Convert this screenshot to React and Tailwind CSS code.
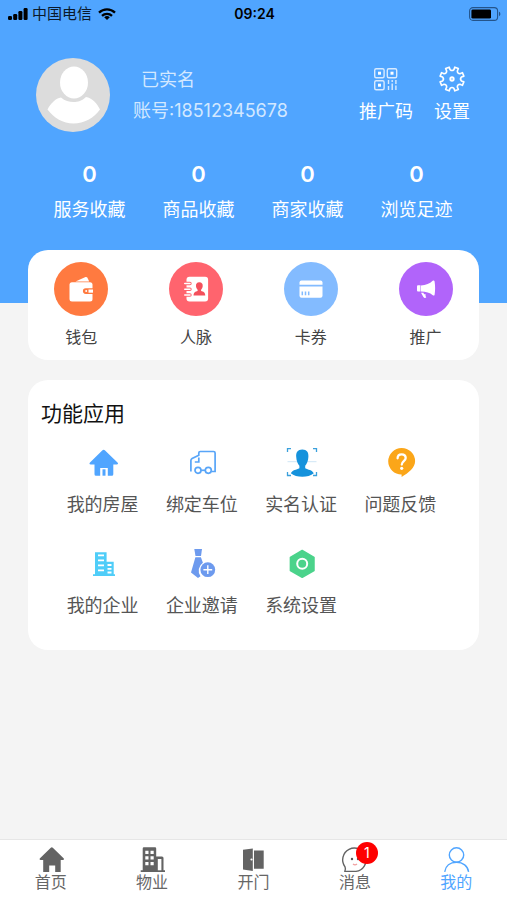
import React from "react";

const BLUE = "#50a5ff";

// outline of a cog wheel centred on 13,13
function gearPath(teeth) {
  const step = 360 / teeth;
  const at = (r, deg) => {
    const a = (deg * Math.PI) / 180;
    return `${(13 + r * Math.cos(a)).toFixed(2)} ${(13 + r * Math.sin(a)).toFixed(2)}`;
  };
  let d = "";
  for (let i = 0; i < teeth; i++) {
    const c = step / 2 + i * step;
    d += `${i === 0 ? "M" : "L"}${at(9.6, c - 11)}L${at(12.2, c - 9)}L${at(12.2, c + 9)}L${at(9.6, c + 11)}`;
    d += `Q${at(7.6, c + step / 2)} ${at(9.6, c + step - 11)}`;
  }
  return d + "Z";
}

/* ---------- Status bar ---------- */
function SignalIcon() {
  return (
    <svg className="w-5 h-3" viewBox="0 0 20 12" fill="#000">
      <rect x="0" y="8" width="4" height="4" rx="1.2" />
      <rect x="5.200" y="6" width="4" height="6" rx="1.2" />
      <rect x="10.4" y="3" width="4" height="9" rx="1.2" />
      <rect x="15.6" y="0" width="4" height="12" rx="1.2" />
    </svg>
  );
}

function WifiIcon() {
  return (
    <svg className="w-[18px] h-3" viewBox="0 0 18 12" fill="none" stroke="#000" strokeWidth="2.300">
      <path d="M1 4.6a11.6 11.6 0 0 1 16 0" />
      <path d="M4 7.8a7.2 7.2 0 0 1 10 0" />
      <path d="M9 12 6.2 9.3a4 4 0 0 1 5.6 0z" fill="#000" stroke="none" />
    </svg>
  );
}

function BatteryIcon() {
  return (
    <svg className="w-8 h-[14px]" viewBox="0 0 32 14">
      <rect x="0.6" y="0.6" width="28" height="12.8" rx="3.4" fill="none" stroke="#24548a" strokeWidth="1.1" />
      <rect x="2.4" y="2.4" width="19.6" height="9.2" rx="1.4" fill="#000" />
      <path d="M30 4.8c1.8.6 1.8 3.8 0 4.4z" fill="#24548a" />
    </svg>
  );
}

/* ---------- Header ---------- */
function Avatar() {
  return (
    <svg className="size-[74px] shrink-0" viewBox="0 0 74 74">
      <circle cx="37" cy="37" r="37" fill="#dcdcdc" />
      <path d="M25 39.500C20 40 14 46 11.500 51.500C18 60 27 65.500 37.500 65.500S58 60 64 51.500C61 45 56 40 50 39C46 43 42 44 37.500 44S29 43 25 39.500Z" fill="#fff" />
      <ellipse cx="38" cy="24.500" rx="14" ry="16" fill="#fff" />
    </svg>
  );
}

function QrIcon() {
  return (
    <svg className="size-[26px]" viewBox="0 0 26 26" fill="none" stroke="#d9ebff" strokeWidth="1.400">
      <rect x="1.700" y="2.700" width="9.400" height="9" rx="1.500" />
      <rect x="14.300" y="2.700" width="9.400" height="9" rx="1.500" />
      <rect x="1.700" y="14.700" width="9.400" height="9" rx="1.500" />
      <g fill="#fff" stroke="none">
        <rect x="5" y="5.700" width="3" height="3" />
        <rect x="17.500" y="5.700" width="3" height="3" />
        <rect x="5" y="17.700" width="3" height="3" />
      </g>
      <path d="M15.500 14v4M15.500 20v4M19.200 14v2M19.200 17.500v6.500M22.900 14v4M22.900 19.500v4.500" />
    </svg>
  );
}

function GearIcon() {
  return (
    <svg className="size-[26px] overflow-visible" viewBox="0 0 26 26" fill="none" stroke="#fff" strokeWidth="1.600" strokeLinejoin="round">
      <path d={gearPath(8)} />
      <circle cx="13" cy="13" r="1.700" strokeWidth="1.900" />
    </svg>
  );
}

/* ---------- Round shortcuts ---------- */
function WalletIcon() {
  return (
    <svg className="size-[54px]" viewBox="0 0 54 54">
      <circle cx="27" cy="27" r="27" fill="#ff7a40" />
      <path d="M21.500 19.500 31 15.200c1-.4 2-.2 2.400.6l1.800 3.700z" fill="#fff" />
      <rect x="15.500" y="20.300" width="23" height="19.100" rx="2.500" fill="#fff" />
      <path d="M39 26.300h-7.300a2.800 2.800 0 0 0 0 5.600H39z" fill="#ff7a40" />
      <path d="M39 27.500h-4.500v3.200H39z" fill="#fff" />
      <circle cx="32.200" cy="29.100" r="1" fill="#fff" />
    </svg>
  );
}

function ContactsIcon() {
  return (
    <svg className="size-[54px]" viewBox="0 0 54 54">
      <circle cx="27" cy="27" r="27" fill="#ff646e" />
      <rect x="17.500" y="14.800" width="21.600" height="24.600" rx="3" fill="#fff" />
      <g stroke="#ff646e" strokeWidth="3.400" strokeLinecap="round">
        <path d="M16 21.500h5M16 27.200h5M16 33h5" />
      </g>
      <g stroke="#fff" strokeWidth="1.600" strokeLinecap="round">
        <path d="M15.800 21.500h5.200M15.800 27.200h5.200M15.800 33h5.200" />
      </g>
      <path d="M30.300 20.300c2.600 0 3.600 1.700 3.400 3.900-.1 1.600-.9 2.700-1.600 3.500v1.200c2.300.6 4 1.300 4.200 4.600H24.500c.2-3.300 1.900-4 4.100-4.600v-1.200c-.7-.8-1.500-1.900-1.600-3.500-.2-2.200.8-3.900 3.300-3.900z" fill="#f4505c" />
    </svg>
  );
}

function CardIcon() {
  return (
    <svg className="size-[54px]" viewBox="0 0 54 54">
      <circle cx="27" cy="27" r="27" fill="#83bbff" />
      <path d="M15.500 22.800v-2.300a2 2 0 0 1 2-2h19a2 2 0 0 1 2 2v2.300z" fill="#fff" />
      <path d="M15.500 24.600h23v9.200a2 2 0 0 1-2 2h-19a2 2 0 0 1-2-2z" fill="#fff" />
      <path d="M18.300 29.500v3.800M21.500 29.500v3.800M24.700 29.500v3.800" stroke="#83bbff" strokeWidth="1.500" />
    </svg>
  );
}

function MegaphoneIcon() {
  return (
    <svg className="size-[54px]" viewBox="0 0 54 54">
      <circle cx="27" cy="27" r="27" fill="#b164fa" />
      <g fill="#fff">
        <path d="M18 24.600c0-.8.500-1.300 1.300-1.300H21.500v6.300h-2.200c-.8 0-1.300-.5-1.300-1.300z" />
        <path d="M22 23.400c5-.3 8.700-1.700 11.700-4.600.8-.7 1.700-.4 1.900.6.700 4.600.7 8.800 0 13.300-.2 1-1 1.200-1.800.5-3-2.400-6.700-3.600-11.800-3.700z" />
        <path d="M22 30.700h2.600c0 1.200.4 1.600 1.500 1.600 1 0 1 1.200.2 1.400l1 1.600c-.9 1-2.200.8-2.900-.4z" />
      </g>
    </svg>
  );
}

/* ---------- Function icons ---------- */
function FnSvg({ children }) {
  return (
    <svg className="size-7 overflow-visible" viewBox="0 0 28 28" fill="none">
      {children}
    </svg>
  );
}

function HouseIcon() {
  return (
    <FnSvg>
      <path d="M13.200 2.600a2 2 0 0 1 2.900 0L28.500 14.400c1 1 .5 2-.8 2H24.300v9.800a1.500 1.500 0 0 1-1.500 1.500H18.800V20h-7.600v7.700H7a1.500 1.500 0 0 1-1.500-1.500v-9.800H1.800c-1.300 0-1.800-1-.8-2z" fill={BLUE} />
      <path d="M13.500 21.300h3v6.400h-3z" fill={BLUE} />
    </FnSvg>
  );
}

function TruckIcon() {
  return (
    <FnSvg>
      <g stroke="#58a5f8" strokeWidth="1.700">
        <path d="M2.900 23.500V12.500c0-1 .4-1.500 1.200-2L10.800 7.200V5c0-1 .5-1.500 1.500-1.500H25.500c1 0 1.600.5 1.600 1.500V23.500H24" />
        <path d="M10.800 9.500V14H6.800" />
        <circle cx="10" cy="22.300" r="3" />
        <circle cx="20.300" cy="22.300" r="3" />
        <path d="M13 22.300h4.300" />
      </g>
    </FnSvg>
  );
}

function FaceIcon() {
  return (
    <FnSvg>
      <path d="M0.500 4V0.600H4M26 .6h3.500V4M.5 24v3.500H4M26 27.500h3.500V24" stroke="#3aa0dc" strokeWidth="1.300" />
      <path d="M0.500 13.700h29" stroke="#cfe6f5" strokeWidth="1" />
      <path d="M15.300 1.500c4.600 0 6.400 3 6.100 7.200-.2 4-1.700 7.500-3.200 9.100v2.400c3 1.700 6.800 1.600 8.600 5-5.500 4.700-17.500 4.700-23 0 1.800-3.400 5.600-3.300 8.600-5v-2.400c-1.500-1.600-3-5.100-3.200-9.100-.3-4.200 1.500-7.200 6.100-7.200z" fill="#1592dc" />
    </FnSvg>
  );
}

function QuestionIcon() {
  return (
    <FnSvg>
      <path d="M15.600 0a13.400 13.400 0 0 1 13.500 13.300c0 6.500-6.500 11.500-13.500 15.700v-2.500A13.300 13.300 0 0 1 2.200 13.300 13.400 13.400 0 0 1 15.600 0z" fill="#fba619" />
      <path d="M11.600 10.300c0-2.500 1.600-4 4-4s4.100 1.500 4.100 3.700c0 3-3.900 3.300-3.900 6.500" stroke="#fff" strokeWidth="2.300" strokeLinecap="round" />
      <circle cx="15.700" cy="20.300" r="1.600" fill="#fff" />
    </FnSvg>
  );
}

function CompanyIcon() {
  return (
    <FnSvg>
      <path d="M6 3.300h11.600V12.700H24.700V25.300H26v1.800H4v-1.800h2z" fill="#4fcdf8" />
      <path d="M9 6.400h6M9 11.400h6M9 16.400h6M9 21.400h6M18.500 16h4M18.500 19.800h4M18.500 23.500h4" stroke="#fff" strokeWidth="1.800" />
    </FnSvg>
  );
}

function InviteIcon() {
  return (
    <FnSvg>
      <path d="M6.300 0h7.700l-1 7H7.500z" fill="#6d9aee" />
      <path d="M7.400 8.300h5.500l2 5.500A9.500 9.500 0 0 0 12.500 27.300L10 29 3 23.500z" fill="#6d9aee" />
      <circle cx="19.800" cy="20.700" r="7.400" fill="#6d9aee" />
      <path d="M19.800 16.300v8.800M15.400 20.700h8.800" stroke="#fff" strokeWidth="1.400" />
    </FnSvg>
  );
}

function HexIcon() {
  return (
    <FnSvg>
      <path d="M15.200 1.500 27 8.300v13.200L15.200 28.300 3.400 21.500V8.300z" fill="#4bd38b" stroke="#4bd38b" strokeWidth="1.500" strokeLinejoin="round" />
      <circle cx="15.200" cy="14.800" r="5" stroke="#fff" strokeWidth="2" />
    </FnSvg>
  );
}

/* ---------- Tab icons ---------- */
function TabSvg({ children }) {
  return (
    <svg className="size-[26px] overflow-visible" viewBox="0 0 26 26" fill="none">
      {children}
    </svg>
  );
}

function TabHome() {
  return (
    <TabSvg>
      <path d="M12.800 1.700a1.500 1.500 0 0 1 2 0L25.600 12.300c.7.800.4 1.700-.6 1.700h-2.300v12h-5.500v-6.500h-6V26H5.200V14H2.600c-1 0-1.300-.9-.6-1.700z" fill="#636363" />
    </TabSvg>
  );
}

function TabBuilding() {
  return (
    <TabSvg>
      <path d="M3.700 2.500a1.200 1.200 0 0 1 1.200-1.200H16a1.200 1.200 0 0 1 1.200 1.200v8H23a1.500 1.500 0 0 1 1.500 1.500v12.300H26V26H1.700v-1.700h2z" fill="#636363" />
      <path d="M18.800 13h3.600v11.300h-3.600z" fill="#fff" />
      <path d="M6.300 4.700h3.200v3.200H6.300zM11.500 4.700h3.200v3.200h-3.200zM6.300 10.300h3.200v3.200H6.300zM11.500 10.300h3.200v3.200h-3.200zM6.300 16h3.200v3.200H6.300zM11.500 16h3.200v3.200h-3.200z" fill="#fff" />
    </TabSvg>
  );
}

function TabDoor() {
  return (
    <TabSvg>
      <path d="M3 3.800 12.800 2.500V25L3 23.500zM14 4.500h9.700v18.300H14z" fill="#636363" />
      <circle cx="11.500" cy="13.500" r="1.100" fill="#fff" />
    </TabSvg>
  );
}

function TabMessage() {
  return (
    <TabSvg>
      <path d="M2.800 25.400c1-1.600.9-2.800.2-4.600A11.700 11.700 0 1 1 14 25.400z" stroke="#636363" strokeWidth="1.400" strokeLinejoin="round" />
      <circle cx="10" cy="13" r="1.200" fill="#555" />
      <circle cx="16" cy="13" r="1.200" fill="#555" />
      <path d="M11 18c1.200 1 2.800 1 4 0" stroke="#f0a0a0" strokeWidth="1.300" />
    </TabSvg>
  );
}

function TabUser() {
  return (
    <TabSvg>
      <circle cx="13.500" cy="9" r="7.200" stroke={BLUE} strokeWidth="1.400" />
      <path d="M1.700 25.800C2.500 20 7 16.300 13.500 16.300S24.800 20 25.600 25.800" stroke={BLUE} strokeWidth="1.400" />
    </TabSvg>
  );
}

const stats = [
  { label: "服务收藏", value: 0 },
  { label: "商品收藏", value: 0 },
  { label: "商家收藏", value: 0 },
  { label: "浏览足迹", value: 0 },
];

const shortcuts = [
  { label: "钱包", icon: <WalletIcon /> },
  { label: "人脉", icon: <ContactsIcon /> },
  { label: "卡券", icon: <CardIcon /> },
  { label: "推广", icon: <MegaphoneIcon /> },
];

const functions = [
  { label: "我的房屋", icon: <HouseIcon /> },
  { label: "绑定车位", icon: <TruckIcon /> },
  { label: "实名认证", icon: <FaceIcon /> },
  { label: "问题反馈", icon: <QuestionIcon /> },
  { label: "我的企业", icon: <CompanyIcon /> },
  { label: "企业邀请", icon: <InviteIcon /> },
  { label: "系统设置", icon: <HexIcon /> },
];

const tabs = [
  { label: "首页", icon: <TabHome /> },
  { label: "物业", icon: <TabBuilding /> },
  { label: "开门", icon: <TabDoor /> },
  { label: "消息", icon: <TabMessage />, badge: 1 },
  { label: "我的", icon: <TabUser />, active: true },
];

export default function App() {
  return (
    <div className="min-h-screen flex flex-col bg-[#f4f4f4] font-['Inter','Noto_Sans_CJK_SC',sans-serif]">
      <header className="bg-[#50a5ff] pb-20">
        <div className="grid grid-cols-3 items-center h-7 pl-2 pr-1.5 text-[#0b1a2b]">
          <div className="flex items-center gap-1">
            <SignalIcon />
            <span className="text-[15px] leading-5 whitespace-nowrap">中国电信</span>
            <span className="ml-0.5"><WifiIcon /></span>
          </div>
          <div className="text-center text-sm font-semibold text-black">09:24</div>
          <div className="flex justify-end">
            <BatteryIcon />
          </div>
        </div>

        <div className="mt-[30px] flex items-center pl-9 pr-[37px]">
          <Avatar />
          <div className="ml-[23px] text-lg leading-[31px] text-[#d3e8ff]">
            <div className="pl-2">已实名</div>
            <div>账号:18512345678</div>
          </div>
          <div className="ml-auto flex gap-[21px] text-lg leading-6 text-white">
            <button className="flex flex-col items-center gap-2">
              <QrIcon />
              <span>推广码</span>
            </button>
            <button className="flex flex-col items-center gap-2">
              <GearIcon />
              <span>设置</span>
            </button>
          </div>
        </div>

        <div className="mt-7 pl-[35px] pr-9 grid grid-cols-4 text-white">
          {stats.map((s) => (
            <button key={s.label} className="flex flex-col items-center gap-2 -mb-px">
              <span className="text-[22px] leading-7 font-semibold">{s.value}</span>
              <span className="text-lg leading-7">{s.label}</span>
            </button>
          ))}
        </div>
      </header>

      <main className="-mt-[53px] px-7 flex flex-col gap-5">
        <section className="bg-white rounded-[20px] pt-3 pb-[11px]">
          <div className="-mx-1 grid grid-cols-4">
            {shortcuts.map((s) => (
              <button key={s.label} className="flex flex-col items-center gap-[9px] text-base leading-6 text-[#444]">
                {s.icon}
                <span>{s.label}</span>
              </button>
            ))}
          </div>
        </section>

        <section className="bg-white rounded-[20px] pt-5 pb-[30px]">
          <h2 className="pl-[13px] text-[21px] leading-7 text-[#111]">功能应用</h2>
          <div className="mt-5 pl-[25px] pr-[29px] grid grid-cols-4 gap-y-[30px]">
            {functions.map((f) => (
              <button key={f.label} className="flex flex-col items-center gap-[15px] text-lg leading-7 text-[#555]">
                {f.icon}
                <span>{f.label}</span>
              </button>
            ))}
          </div>
        </section>
      </main>

      <nav className="mt-auto grid grid-cols-5 border-t border-[#e6e6e6] bg-white pt-1.5 pb-2">
        {tabs.map((t) => (
          <a
            key={t.label}
            href="#"
            className={`flex flex-col items-center text-base leading-5 ${t.active ? "text-[#50a5ff]" : "text-[#666]"}`}
          >
            <span className="relative">
              {t.icon}
              {t.badge && (
                <span className="absolute -top-1 left-[14px] size-[22px] rounded-full bg-[#fe0000] text-center text-sm leading-[22px] text-white">
                  {t.badge}
                </span>
              )}
            </span>
            <span>{t.label}</span>
          </a>
        ))}
      </nav>
    </div>
  );
}
